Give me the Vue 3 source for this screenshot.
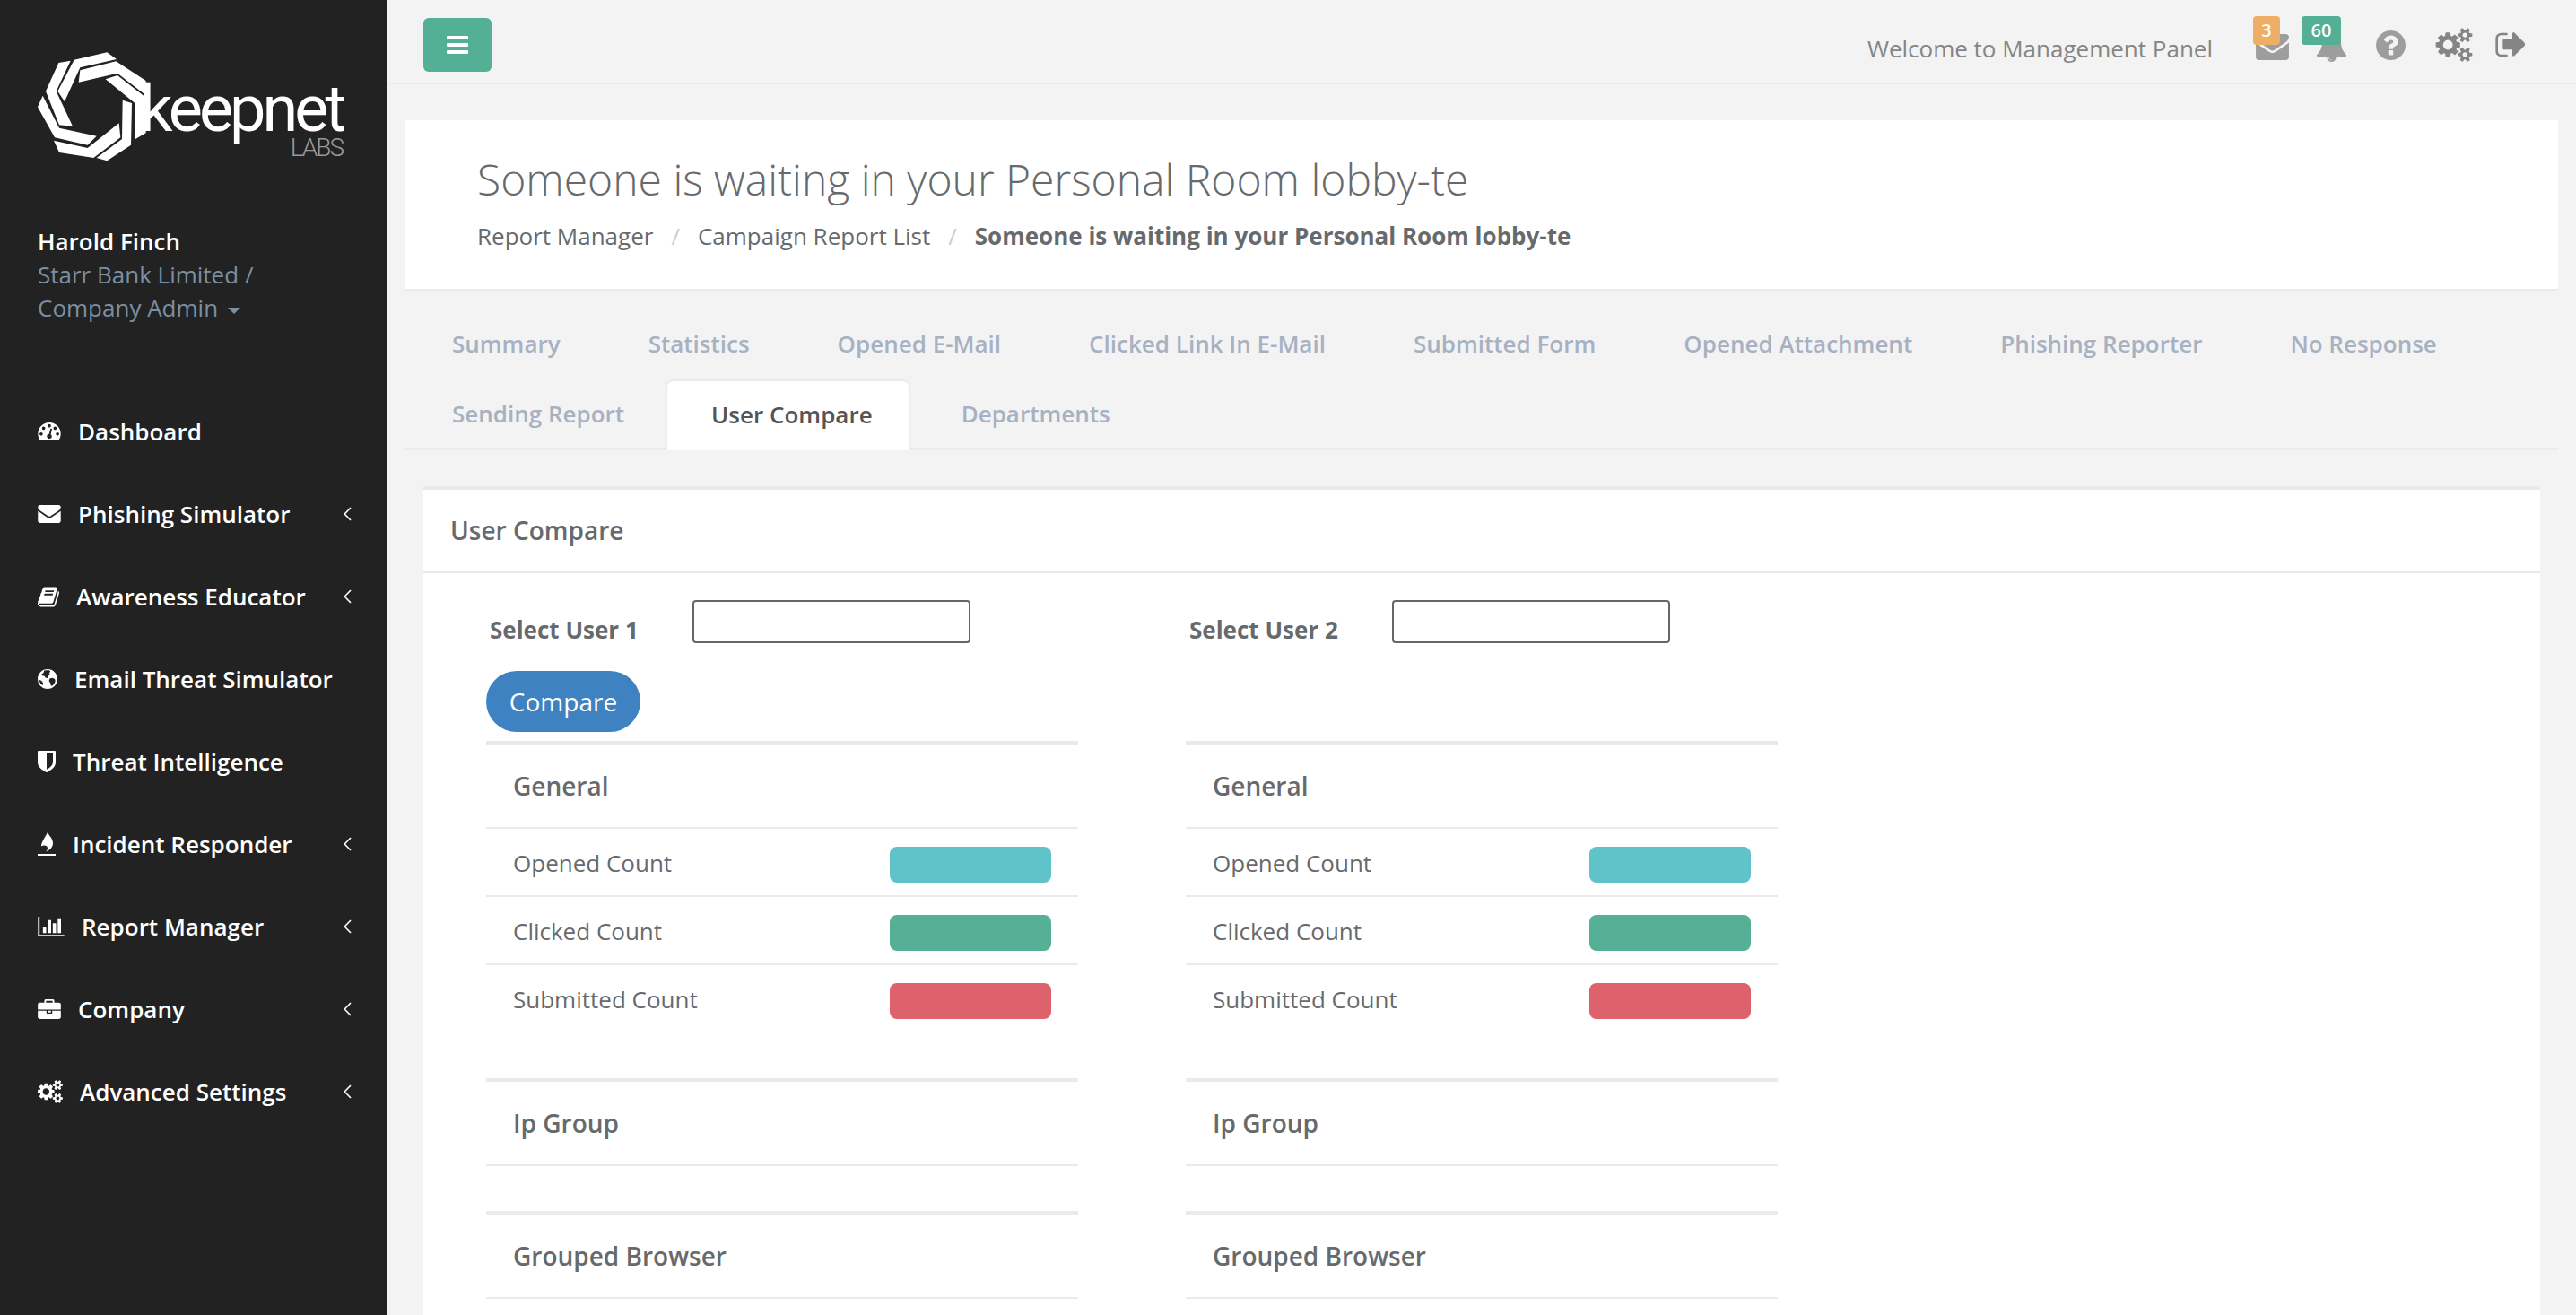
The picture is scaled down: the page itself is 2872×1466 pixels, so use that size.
<script setup>
const P = {
  dashboard: ['0 256 1792 1408', 'M384 1152q0-53-37.500-90.500T256 1024t-90.500 37.500T128 1152t37.500 90.500T256 1280t90.500-37.500T384 1152zm192-448q0-53-37.500-90.500T448 576t-90.500 37.500T320 704t37.500 90.500T448 832t90.500-37.500T576 704zm428 481l101-382q6-26-7.500-48.500T1059 725t-48 6.500-30 39.500L880 1153q-60 5-107 43.500T710 1295q-20 77 20 146t117 89 146-20 89-117q16-60-6-117t-72-91zm660-33q0-53-37.500-90.500T1536 1024t-90.500 37.500T1408 1152t37.500 90.500 90.500 37.500 90.500-37.500T1664 1152zm-640-640q0-53-37.500-90.500T896 384t-90.500 37.500T768 512t37.500 90.500T896 640t90.500-37.500T1024 512zm448 192q0-53-37.500-90.500T1344 576t-90.500 37.500T1216 704t37.500 90.500T1344 832t90.500-37.500T1472 704zm320 448q0 261-141 483-19 29-54 29H195q-35 0-54-29Q0 1414 0 1152q0-182 71-348t191-286 286-191 348-71 348 71 286 191 191 286 71 348z'],
  envelope: ['0 256 1792 1408', 'M1792 710v794q0 66-47 113t-113 47H160q-66 0-113-47T0 1504V710q44 49 101 87 362 246 497 345 57 42 92.500 65.500t94.500 48 110 24.500h2q51 0 110-24.500t94.500-48 92.500-65.500q170-123 498-345 57-39 100-87zm0-294q0 79-49 151t-122 123q-376 261-468 325-10 7-42.500 30.500t-54 38-52 32.500-57.500 27-50 9h-2q-23 0-50-9t-57.500-27-52-32.500-54-38T639 1015q-91-64-262-182.500T172 690q-62-42-117-115.500T0 438q0-78 41.500-130T160 256h1472q65 0 112.500 47t47.500 113z'],
  book: ['64 124 1664 1540', 'M1703 478q40 57 18 129l-275 906q-19 64-76.500 107.500T1247 1664H324q-77 0-148.500-53.500T76 1479q-24-67-2-127 0-4 3-27t4-37q1-8-3-21.500t-3-19.500q2-11 8-21t16.500-23.500T116 1179q23-38 45-91.500t30-91.500q3-10 .5-30t-.5-28q3-11 17-28t17-23q21-36 42-92t25-90q1-9-2.500-32t.5-28q4-13 22-30.500t22-22.500q19-26 42.500-84.500T404 411q1-8-3-25.500t-2-26.500q2-8 9-18t18-23 17-21q8-12 16.500-30.500t15-35 16-36 19.500-32 26.500-23.500 36-11.500T620 130l-1 3q38-9 51-9h761q74 0 114 56t18 130l-274 906q-36 119-71.500 153.500T1089 1404H220q-27 0-38 15-11 16-1 43 24 70 144 70h923q29 0 56-15.500t35-41.500l300-987q7-22 5-57 38 15 59 43zm-1064 2q-4 13 2 22.500t20 9.500h608q13 0 25.500-9.500T1311 480l21-64q4-13-2-22.500t-20-9.500H702q-13 0-25.500 9.500T660 416zm-83 256q-4 13 2 22.500t20 9.500h608q13 0 25.500-9.500T1228 736l21-64q4-13-2-22.500t-20-9.500H619q-13 0-25.500 9.500T577 672z'],
  globe: ['0 0 24 24', 'M12 0a12 12 0 1 0 0 24a12 12 0 1 0 0-24zM8 1.600l5.500-.6l2 1.800-1.500 2 1 2-2.500 1.500-.5 2.500-2.500-.5-1.500-2-2.500-.5-.5-2 2-1.200zM14.500 11.500l3.500-.8 2.800 1.300.7 2.500-1.500 3.500-2.500 2.500-1.500-.5-.5-3-1.700-2.500zM2 13l2.500 1 2 2.500-.5 3.500-2.500-2.500-1.500-3z'],
  shield: ['256 128 1280 1536', 'M1344 960V320H896v1137q119-63 213-137 235-184 235-360zm192-768v768q0 86-33.500 170.500t-83 150-118 127.500-126.500 103-121 77.500-89.500 49.500-42.500 20q-12 6-26 6t-26-6q-16-7-42.500-20t-89.500-49.500-121-77.500-126.500-103-118-127.500-83-150T256 960V192q0-26 19-45t45-19h1152q26 0 45 19t19 45z'],
  fire: ['0 0 20 26', 'M11 0C12 3 17 6.500 17 12c0 4.500-3.500 8-8 9.500 2-1.800 2.500-3.800 1.500-5.800-2-1.600-4.200-1.600-6.500-.3C4 11 8 6 11 0zM0 24h20v2H0z'],
  bars: ['0 128 2048 1536', 'M640 896v512H384V896h256zm384-512v1024H768V384h256zm1024 1152v128H0V128h128v1408h1920zM1408 640v768h-256V640h256zm384-384v1152h-256V256h256z'],
  briefcase: ['0 0 1792 1536', 'M640 256h512V128H640v128zm1152 640v480q0 66-47 113t-113 47H160q-66 0-113-47T0 1376V896h672v160q0 26 19 45t45 19h320q26 0 45-19t19-45V896h672zm-768 0v128H768V896h256zm768-480v384H0V416q0-66 47-113t113-47h352V96q0-40 28-68t68-28h576q40 0 68 28t28 68v160h352q66 0 113 47t47 113z'],
  cogs: ['64 0 1920 1792', 'M960 896q0-106-75-181t-181-75-181 75-75 181 75 181 181 75 181-75 75-181zm768 512q0-52-38-90t-90-38-90 38-38 90q0 53 37.500 90.500t90.500 37.500 90.500-37.500 37.500-90.500zm0-1024q0-52-38-90t-90-38-90 38-38 90q0 53 37.500 90.500T1600 512t90.500-37.500T1728 384zm-384 421v185q0 10-7 19.500t-16 10.500l-155 24q-11 35-32 76 34 48 90 115 7 11 7 20 0 12-7 19-23 30-82.500 89.500T1063 1423q-11 0-21-7l-115-90q-37 19-77 31-11 108-23 155-7 24-30 24H611q-11 0-20-7.500t-10-17.500l-23-153q-34-10-75-31l-118 89q-7 7-20 7-11 0-21-8-144-133-144-160 0-9 7-19 10-14 41-53t47-61q-23-44-35-82l-152-24q-10-1-17-9.500T64 981V796q0-10 7-19.500T87 766l155-24q11-35 32-76-34-48-90-115-7-11-7-20 0-12 7-20 22-30 82-89t79-59q11 0 21 7l115 90q34-18 77-32 11-108 23-154 7-24 30-24h186q11 0 20 7.500t10 17.500l23 153q34 10 75 31l118-89q8-7 20-7 11 0 21 8 144 133 144 160 0 8-7 19-12 16-42 54t-45 60q23 48 34 82l152 23q10 2 17 10.500t7 19.500zm640 533v140q0 16-149 31-12 27-30 52 51 113 51 138 0 4-4 7-122 71-124 71-8 0-46-47t-52-68q-20 2-30 2t-30-2q-14 21-52 68t-46 47q-2 0-124-71-4-3-4-7 0-25 51-138-18-25-30-52-149-15-149-31v-140q0-16 149-31 13-29 30-52-51-113-51-138 0-4 4-7 4-2 35-20t59-34 30-16q8 0 46 46.500t52 67.500q20-2 30-2t30 2q51-71 92-112l6-2q4 0 124 70 4 3 4 7 0 25-51 138 17 23 30 52 149 15 149 31zm0-1024v140q0 16-149 31-12 27-30 52 51 113 51 138 0 4-4 7-122 71-124 71-8 0-46-47t-52-68q-20 2-30 2t-30-2q-14 21-52 68t-46 47q-2 0-124-71-4-3-4-7 0-25 51-138-18-25-30-52-149-15-149-31V314q0-16 149-31 13-29 30-52-51-113-51-138 0-4 4-7 4-2 35-20t59-34 30-16q8 0 46 46.500t52 67.500q20-2 30-2t30 2q51-71 92-112l6-2q4 0 124 70 4 3 4 7 0 25-51 138 17 23 30 52 149 15 149 31z'],
  bell: ['64 0 1664 1792', 'M912 1696q0-16-16-16-59 0-101.500-42.500T752 1536q0-16-16-16t-16 16q0 73 51.500 124.500T896 1712q16 0 16-16zm816-288q0 52-38 90t-90 38h-448q0 106-75 181t-181 75-181-75-75-181H192q-52 0-90-38t-38-90q50-42 91-88t85-119.500 74.500-158.500 50-206T384 576q0-152 117-282.500T808 135q-8-19-8-39 0-40 28-68t68-28 68 28 28 68q0 20-8 39 190 28 307 158.500T1408 576q0 139 19.500 260t50 206 74.500 158.500 85 119.500 91 88z'],
  question: ['128 128 1536 1536', 'M1024 1376v-192q0-14-9-23t-23-9H800q-14 0-23 9t-9 23v192q0 14 9 23t23 9h192q14 0 23-9t9-23zm256-672q0-88-55.500-163T1086 425t-170-41q-243 0-371 213-15 24 8 42l132 100q7 6 19 6 16 0 25-12 53-68 86-92 34-24 86-24 48 0 85.500 26t37.500 59q0 38-20 61t-68 45q-63 28-115.500 86.500T768 1020v36q0 14 9 23t23 9h192q14 0 23-9t9-23q0-19 21.500-49.500T1100 957q32-18 49-28.500t46-35 44.500-48 28-60.500 12.500-81zm384 192q0 209-103 385.500T1281.500 1561 896 1664t-385.500-103T231 1281.500 128 896t103-385.500T510.500 231 896 128t385.500 103T1561 510.500 1664 896z'],
  signout: ['64 224 1600 1344', 'M704 1440q0 4 1 20t.5 26.500-3 23.500-10 19.500-20.500 6.500H352q-119 0-203.500-84.500T64 1248V544q0-119 84.500-203.500T352 256h320q13 0 22.500 9.500T704 288q0 4 1 20t.5 26.500-3 23.500-10 19.500-20.500 6.500H352q-66 0-113 47t-47 113v704q0 66 47 113t113 47h312l11.500 1 11.500 3 8 5.500 7 9 2 13.500zm928-544q0 26-19 45l-544 544q-19 19-45 19t-45-19-19-45v-288H512q-26 0-45-19t-19-45V640q0-26 19-45t45-19h448V288q0-26 19-45t45-19 45 19l544 544q19 19 19 45z'],
}

const nav = [
  { label: 'Dashboard', icon: 'dashboard', w: 26, h: 20 },
  { label: 'Phishing Simulator', icon: 'envelope', w: 26, h: 20, more: true },
  { label: 'Awareness Educator', icon: 'book', w: 24, h: 23, more: true },
  { label: 'Email Threat Simulator', icon: 'globe', w: 22, h: 22 },
  { label: 'Threat Intelligence', icon: 'shield', w: 20, h: 24 },
  { label: 'Incident Responder', icon: 'fire', w: 20, h: 26, more: true },
  { label: 'Report Manager', icon: 'bars', w: 30, h: 22, more: true },
  { label: 'Company', icon: 'briefcase', w: 26, h: 22, more: true },
  { label: 'Advanced Settings', icon: 'cogs', w: 28, h: 26, more: true },
]

const tabs = ['Summary', 'Statistics', 'Opened E-Mail', 'Clicked Link In E-Mail', 'Submitted Form', 'Opened Attachment', 'Phishing Reporter', 'No Response', 'Sending Report', 'User Compare', 'Departments']

const counts = [
  { label: 'Opened Count', color: '#60c3c9' },
  { label: 'Clicked Count', color: '#56b096' },
  { label: 'Submitted Count', color: '#de626c' },
]

const users = [1, 2]

const logoStrips = [
  'M140 50L250 25L282 48L160 76L108 190L85 155Z',
  'M88 60L128 53L80 155L135 272L90 268L45 155Z',
  'M35 170L90 278L215 305L185 335L75 310L18 208Z',
  'M72 320L185 345L290 262L295 310L205 378L90 360Z',
  'M215 378L300 315L302 185L333 195L330 335L250 388Z',
  'M245 115L285 102L382 178L380 295L345 315L343 195Z',
  'M160 85L280 55L380 120L382 170L285 95L155 125Z',
]
</script>

<template>
  <div class="app">
    <aside class="sidebar">
      <div class="logo">
        <svg class="logo-mark" width="136" height="136" viewBox="0 0 408 408">
          <path v-for="s in logoStrips" :key="s" :d="s" fill="#fff" />
        </svg>
        <div class="logo-text">
          <span class="logo-name">keepnet</span>
          <span class="logo-labs">LABS</span>
        </div>
      </div>
      <div class="profile">
        <div class="profile-name">Harold Finch</div>
        <div class="profile-sub">Starr Bank Limited /</div>
        <div class="profile-sub">Company Admin <i class="caret"></i></div>
      </div>
      <nav class="nav">
        <a v-for="item in nav" :key="item.label" class="nav-item">
          <svg :width="item.w" :height="item.h" :viewBox="P[item.icon][0]" fill="#fff" class="nav-icon"><path :d="P[item.icon][1]" fill-rule="evenodd" /></svg>
          <span class="nav-label">{{ item.label }}</span>
          <svg v-if="item.more" class="chev" width="9" height="16" viewBox="0 0 9 16"><path d="M8 1L1.200 8L8 15" fill="none" stroke="#fff" stroke-width="1.600" /></svg>
        </a>
      </nav>
    </aside>

    <main class="main">
      <header class="topbar">
        <button class="menu-btn">
          <span></span><span></span><span></span>
        </button>
        <div class="top-right">
          <span class="welcome">Welcome to Management Panel</span>
          <div class="ti ti-mail">
            <svg width="37" height="29" :viewBox="P.envelope[0]" fill="#9d9d9d"><path :d="P.envelope[1]" /></svg>
            <span class="badge badge-orange">3</span>
          </div>
          <div class="ti ti-bell">
            <svg width="35" height="36" :viewBox="P.bell[0]" fill="#9d9d9d"><path :d="P.bell[1]" /></svg>
            <span class="badge badge-green">60</span>
          </div>
          <div class="ti ti-q">
            <svg width="33" height="33" :viewBox="P.question[0]" fill="#9d9d9d"><path :d="P.question[1]" /></svg>
          </div>
          <div class="ti ti-cogs">
            <svg width="42" height="38" :viewBox="P.cogs[0]" fill="#858585"><path :d="P.cogs[1]" /></svg>
          </div>
          <div class="ti ti-out">
            <svg width="34" height="28" :viewBox="P.signout[0]" fill="#858585"><path :d="P.signout[1]" /></svg>
          </div>
        </div>
      </header>

      <section class="page-head">
        <h2>Someone is waiting in your Personal Room lobby-te</h2>
        <ol class="crumbs">
          <li>Report Manager</li>
          <li class="sep">/</li>
          <li>Campaign Report List</li>
          <li class="sep">/</li>
          <li class="strong">Someone is waiting in your Personal Room lobby-te</li>
        </ol>
      </section>

      <ul class="tabs">
        <li v-for="t in tabs" :key="t" class="tab" :class="{ active: t === 'User Compare' }">{{ t }}</li>
      </ul>

      <section class="panel">
        <div class="panel-title">User Compare</div>
        <div class="compare">
          <div v-for="u in users" :key="'s' + u" class="select-row">
            <label>Select User {{ u }}</label>
            <input type="text" />
          </div>
          <div class="btn-row"><button class="compare-btn">Compare</button></div>
          <div v-for="u in users" :key="'t' + u" class="stats">
            <div class="block general">
              <div class="block-head">General</div>
              <div v-for="c in counts" :key="c.label" class="stat-row">
                <span class="stat-label">{{ c.label }}</span>
                <i class="pill" :style="{ background: c.color }"></i>
              </div>
            </div>
            <div class="block empty">
              <div class="block-head">Ip Group</div>
            </div>
            <div class="block empty">
              <div class="block-head">Grouped Browser</div>
            </div>
          </div>
        </div>
      </section>
    </main>
  </div>
</template>

<style>
html, body { margin: 0; height: 100%; overflow: hidden; background: #f3f3f4; }
</style>

<style scoped>
.app {
  display: flex;
  width: 2872px;
  height: 1466px;
  overflow: hidden;
  font-family: "Open Sans", sans-serif;
  font-size: 26px;
  color: #676a6c;
  background: #f3f3f4;
}
.sidebar {
  flex: 0 0 432px;
  background: #222;
  color: #fff;
}
.logo {
  display: flex;
  align-items: flex-start;
  padding: 50px 0 0 36px;
  height: 186px;
  box-sizing: border-box;
}
.logo-mark { flex: none; }
.logo-text {
  display: flex;
  flex-direction: column;
  align-items: flex-end;
  flex: none;
  width: 216px;
  margin-left: -6px;
  font-family: Roboto, sans-serif;
}
.logo-name {
  font-size: 72px;
  line-height: 74px;
  margin-top: 35px;
  font-weight: 400;
  letter-spacing: -4px;
  color: #fff;
}
.logo-labs {
  font-size: 28px;
  line-height: 28px;
  margin-top: -8px;
  font-weight: 300;
  letter-spacing: -2px;
  color: #999;
}
.profile {
  padding: 65px 0 0 42px;
  line-height: 37px;
}
.profile-name { font-weight: 600; color: #fff; }
.profile-sub { color: #7b8fa3; }
.caret {
  display: inline-block;
  margin-left: 4px;
  vertical-align: middle;
  border-top: 7px solid #7b8fa3;
  border-left: 7px solid transparent;
  border-right: 7px solid transparent;
}
.nav { margin-top: 73px; }
.nav-item {
  display: flex;
  align-items: center;
  height: 92px;
  padding: 0 40px 0 42px;
  font-weight: 600;
  color: #fff;
}
.nav-icon { flex: none; margin-right: 19px; }
.nav-label { white-space: nowrap; }
.chev { margin-left: auto; }

.main { flex: 1; min-width: 0; }
.topbar {
  display: flex;
  justify-content: space-between;
  height: 92px;
  border-bottom: 2px solid #ebebec;
}
.menu-btn {
  width: 76px;
  height: 60px;
  margin: 20px 0 0 40px;
  padding: 0;
  border: 0;
  border-radius: 6px;
  background: #54b095;
  display: flex;
  flex-direction: column;
  align-items: center;
  justify-content: center;
  gap: 4px;
}
.menu-btn span {
  display: block;
  width: 24px;
  height: 4px;
  background: #fff;
  border-radius: 1px;
}
.top-right {
  display: flex;
  align-items: center;
  padding: 8px 56px 0 0;
}
.welcome { color: #858585; margin-top: 8px; white-space: nowrap; }
.ti { position: relative; display: flex; }
.ti-mail { margin-left: 48px; margin-top: 5px; }
.ti-bell { margin-left: 30px; margin-top: 1px; }
.ti-q { margin-left: 32px; }
.ti-cogs { margin-left: 33px; }
.ti-out { margin-left: 25px; }
.badge {
  position: absolute;
  top: -20px;
  height: 32px;
  border-radius: 4px;
  color: #fff;
  font-size: 20px;
  font-weight: 600;
  line-height: 32px;
  text-align: center;
}
.badge-orange { left: -3px; width: 30px; background: #eeae66; }
.badge-green { left: -16px; width: 44px; background: #54b095; top: -15px; }

.page-head {
  margin: 40px 20px 0;
  height: 190px;
  box-sizing: border-box;
  padding: 38px 0 0 80px;
  background: #fff;
  border-bottom: 2px solid #ebebec;
}
.page-head h2 {
  margin: 0;
  font-size: 48px;
  line-height: 56px;
  font-weight: 300;
  white-space: nowrap;
}
.crumbs {
  display: flex;
  margin: 17px 0 0;
  padding: 0;
  list-style: none;
  line-height: 36px;
  white-space: nowrap;
}
.crumbs .sep { color: #ccc; margin: 0 20px; }
.crumbs .strong { font-weight: 700; }

.tabs {
  display: flex;
  flex-wrap: wrap;
  align-content: flex-start;
  align-items: flex-start;
  margin: 20px 20px 0;
  padding: 0 0 0 3px;
  list-style: none;
  border-bottom: 2px solid #ebebec;
  height: 156px;
}
.tab {
  height: 78px;
  box-sizing: border-box;
  padding: 0 49px;
  line-height: 78px;
  font-weight: 600;
  color: #a7b1c2;
  white-space: nowrap;
}
.tab.active {
  height: 79px;
  margin: 1px 8px 0 -3px;
  padding: 0 40px 0 49px;
  background: #fff;
  color: #555;
  border: 2px solid #ebebec;
  border-bottom: 0;
  border-radius: 8px 8px 0 0;
  line-height: 74px;
}

.panel {
  margin: 40px 40px 0;
  background: #fff;
  border-top: 4px solid #e7eaec;
}
.panel-title {
  height: 93px;
  box-sizing: border-box;
  padding-left: 30px;
  line-height: 90px;
  font-size: 28px;
  font-weight: 600;
  border-bottom: 2px solid #e7eaec;
}
.compare {
  display: grid;
  grid-template-columns: 780px 780px;
  padding-left: 70px;
}
.select-row {
  display: flex;
  align-items: flex-start;
  padding: 30px 0 0 4px;
  height: 109px;
  box-sizing: border-box;
}
.select-row label { width: 226px; font-weight: 700; line-height: 36px; margin-top: 15px; }
.select-row input {
  width: 310px;
  height: 48px;
  box-sizing: border-box;
  margin: 0;
  padding: 0 8px;
  background: #fff;
  border: 2px solid #666;
  border-radius: 4px;
  outline: 0;
}
.btn-row { grid-column: 1 / 3; height: 78px; }
.compare-btn {
  width: 172px;
  height: 68px;
  padding: 0;
  border: 0;
  border-radius: 34px;
  background: #3e82c1;
  color: #fff;
  font-family: inherit;
  font-size: 28px;
}
.stats { width: 660px; }
.block { border-top: 4px solid #e9eaeb; }
.block-head {
  height: 94px;
  box-sizing: border-box;
  padding-left: 30px;
  line-height: 92px;
  font-size: 28px;
  font-weight: 600;
  border-bottom: 2px solid #e9eaeb;
}
.general { height: 376px; box-sizing: border-box; }
.empty { height: 148px; box-sizing: border-box; }
.stat-row {
  display: flex;
  align-items: center;
  justify-content: space-between;
  height: 76px;
  box-sizing: border-box;
  padding: 6px 30px 0;
  border-bottom: 2px solid #e9eaeb;
}
.stat-row:last-child { border-bottom: 0; height: 74px; }
.stat-label { margin-top: -4px; }
.pill {
  display: block;
  width: 180px;
  height: 40px;
  border-radius: 8px;
}
</style>
